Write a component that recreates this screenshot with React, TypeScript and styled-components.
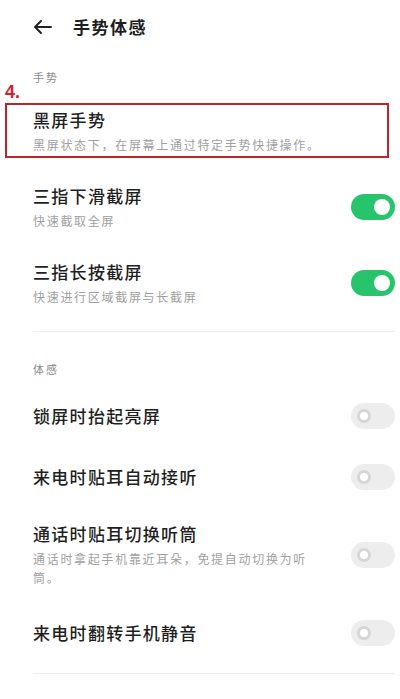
import React from "react";
import styled, { createGlobalStyle } from "styled-components";

const Global = createGlobalStyle`
  html, body { margin: 0; padding: 0; background: #ffffff; }
  body {
    font-family: "Noto Sans CJK SC", "Noto Sans", sans-serif;
    color: #222;
    -webkit-font-smoothing: antialiased;
  }
`;

const Page = styled.div`
  width: 400px;
  min-height: 699px;
  background: #fff;
  display: flex;
  flex-direction: column;
`;

const Header = styled.header`
  height: 54px;
  display: flex;
  align-items: center;
  padding-left: 32px;
  gap: 20px;
`;

const BackBtn = styled.span`
  display: flex;
  align-items: center;
  width: 21px;
  height: 20px;
  color: #222;
`;

const Title = styled.h1`
  margin: 0;
  font-size: 17px;
  font-weight: 700;
  letter-spacing: 1.5px;
  line-height: 24px;
  color: #1e1e1e;
`;

const SectionLabel = styled.div<{ $top: number; $bottom: number }>`
  margin: ${(p) => p.$top}px 0 ${(p) => p.$bottom}px;
  padding-left: 33px;
  font-size: 11px;
  letter-spacing: 2px;
  line-height: 20px;
  color: #8a8a8a;
`;

const Row = styled.div<{ $multi?: boolean }>`
  position: relative;
  display: flex;
  align-items: center;
  padding: ${(p) => (p.$multi ? "15px" : "17.5px")} 5px ${(p) => (p.$multi ? "15px" : "17.5px")} 33px;
`;

const Highlight = styled.div`
  position: absolute;
  top: 10px;
  bottom: 11px;
  left: 5px;
  right: 11px;
  border: 2px solid #c0222b;
  pointer-events: none;
`;

const Annotation = styled.span`
  position: absolute;
  left: 5px;
  top: -10px;
  font-family: "Liberation Sans", "Noto Sans", sans-serif;
  font-size: 18px;
  font-weight: 700;
  line-height: 18px;
  color: #d0212b;
`;

const TextCol = styled.div`
  flex: 1;
  min-width: 0;
  margin-right: 33px;
  display: flex;
  flex-direction: column;
`;

const ItemTitle = styled.div`
  font-size: 17px;
  font-weight: 500;
  letter-spacing: 1.3px;
  line-height: 24px;
  color: #1f1f1f;
`;

const ItemDesc = styled.div`
  margin-top: 3px;
  font-size: 12px;
  letter-spacing: 1.7px;
  line-height: 19px;
  color: #a0a0a0;
`;

const Track = styled.div<{ $on: boolean }>`
  flex: none;
  width: 44px;
  height: 26px;
  border-radius: 13px;
  background: ${(p) => (p.$on ? "#28c46c" : "#ededed")};
  display: flex;
  align-items: center;
  justify-content: ${(p) => (p.$on ? "flex-end" : "flex-start")};
  padding: 0 5px;
  box-sizing: border-box;
`;

const Knob = styled.div<{ $on: boolean }>`
  width: ${(p) => (p.$on ? 16 : 14)}px;
  height: ${(p) => (p.$on ? 16 : 14)}px;
  border-radius: 50%;
  box-sizing: border-box;
  background: #fff;
  border: ${(p) => (p.$on ? "none" : "3px solid #d6d6d6")};
  margin-left: ${(p) => (p.$on ? 0 : 1)}px;
`;

const Divider = styled.hr<{ $top: number; $bottom: number }>`
  margin: ${(p) => p.$top}px 5px ${(p) => p.$bottom}px 33px;
  border: none;
  height: 1px;
  background: #ececec;
`;

const Toggle = ({ on }: { on: boolean }) => (
  <Track $on={on}>
    <Knob $on={on} />
  </Track>
);

type Item = { title: string; desc?: string; toggle?: boolean };

const Setting = ({ item, children }: { item: Item; children?: React.ReactNode }) => (
  <Row $multi={!!item.desc}>
    {children}
    <TextCol>
      <ItemTitle>{item.title}</ItemTitle>
      {item.desc && <ItemDesc>{item.desc}</ItemDesc>}
    </TextCol>
    {item.toggle !== undefined && <Toggle on={item.toggle} />}
  </Row>
);

export default function App() {
  return (
    <Page>
      <Global />
      <Header>
        <BackBtn>
          <svg width="21" height="20" viewBox="0 0 21 20" fill="none">
            <path d="M19 10H3M9 4L3 10L9 16" stroke="#222" strokeWidth="2" strokeLinecap="round" strokeLinejoin="round" />
          </svg>
        </BackBtn>
        <Title>手势体感</Title>
      </Header>

      <SectionLabel $top={13} $bottom={6}>手势</SectionLabel>
      <Setting item={{ title: "黑屏手势", desc: "黑屏状态下，在屏幕上通过特定手势快捷操作。" }}>
        <Annotation>4.</Annotation>
        <Highlight />
      </Setting>
      <Setting item={{ title: "三指下滑截屏", desc: "快速截取全屏", toggle: true }} />
      <Setting item={{ title: "三指长按截屏", desc: "快速进行区域截屏与长截屏", toggle: true }} />
      <Divider $top={10} $bottom={27} />

      <SectionLabel $top={0} $bottom={6}>体感</SectionLabel>
      <Setting item={{ title: "锁屏时抬起亮屏", toggle: false }} />
      <Setting item={{ title: "来电时贴耳自动接听", toggle: false }} />
      <Setting item={{ title: "通话时贴耳切换听筒", desc: "通话时拿起手机靠近耳朵，免提自动切换为听筒。", toggle: false }} />
      <Setting item={{ title: "来电时翻转手机静音", toggle: false }} />
      <Divider $top={10} $bottom={0} />
    </Page>
  );
}
